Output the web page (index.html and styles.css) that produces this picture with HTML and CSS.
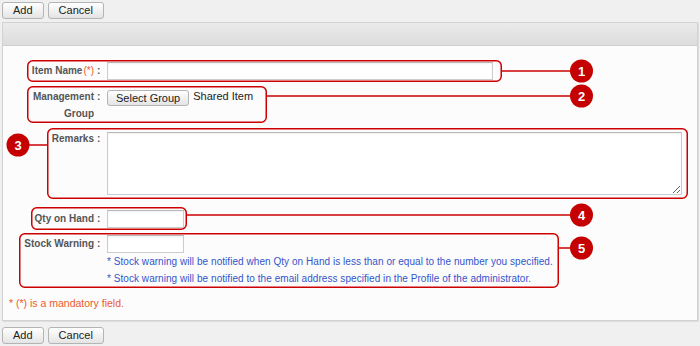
FILE: index.html
```html
<!DOCTYPE html>
<html lang="en">
<head>
  <meta charset="UTF-8" />
  <title>Add Item</title>
  <link rel="stylesheet" href="styles.css">
</head>
<body>
  <div class="toolbar">
    <button class="btn">Add</button>
    <button class="btn">Cancel</button>
  </div>

  <div class="panel">
    <div class="panel-head"></div>
    <div class="panel-body">
      <div class="field field-name">
        <label class="label">Item Name<span class="req">(*)</span></label>
        <span class="colon">:</span>
        <div class="control"><input type="text" class="text text-wide"></div>
      </div>

      <div class="field field-group">
        <label class="label label-wrap">Management Group</label>
        <span class="colon">:</span>
        <div class="control control-group">
          <button class="btn btn-select">Select Group</button>
          <span class="shared">Shared Item</span>
        </div>
      </div>

      <div class="field field-remarks">
        <label class="label">Remarks</label>
        <span class="colon">:</span>
        <div class="control"><textarea class="area"></textarea></div>
      </div>

      <div class="field field-qty">
        <label class="label">Qty on Hand</label>
        <span class="colon">:</span>
        <div class="control"><input type="text" class="text text-short"></div>
      </div>

      <div class="field field-warning">
        <label class="label">Stock Warning</label>
        <span class="colon">:</span>
        <div class="control">
          <input type="text" class="text text-short">
          <p class="note">* Stock warning will be notified when Qty on Hand is less than or equal to the number you specified.</p>
          <p class="note">* Stock warning will be notified to the email address specified in the Profile of the administrator.</p>
        </div>
      </div>

      <p class="mandatory">* (*) is a mandatory field.</p>

      <!-- help callouts drawn over the form -->
      <svg class="callouts" width="694" height="260" viewBox="0 0 694 260">
        <g class="box">
          <rect x="24.75" y="14.75" width="473.5" height="20.5" rx="5" />
          <rect x="24.75" y="40.75" width="238.5" height="35.5" rx="5" />
          <rect x="44.75" y="82.75" width="639.5" height="69.5" rx="5" />
          <rect x="28.75" y="161.75" width="154.5" height="21.5" rx="5" />
          <rect x="16.75" y="187.75" width="538.5" height="53.5" rx="5" />
        </g>
        <g class="link">
          <line x1="498" y1="25" x2="570" y2="25" />
          <line x1="263" y1="50" x2="570" y2="50" />
          <line x1="22" y1="99" x2="44" y2="99" />
          <line x1="183" y1="169" x2="570" y2="169" />
          <line x1="555" y1="202" x2="570" y2="202" />
        </g>
        <g class="dot">
          <circle cx="578.5" cy="25" r="11.5" />
          <circle cx="578.5" cy="50" r="11.5" />
          <circle cx="15" cy="99" r="11.5" />
          <circle cx="578.5" cy="169" r="11.5" />
          <circle cx="578.5" cy="202" r="11.5" />
        </g>
        <g class="num">
          <text x="578.5" y="29.5">1</text>
          <text x="578.5" y="54.5">2</text>
          <text x="15" y="103.5">3</text>
          <text x="578.5" y="173.5">4</text>
          <text x="578.5" y="206.5">5</text>
        </g>
      </svg>
    </div>
  </div>

  <div class="toolbar toolbar-bottom">
    <button class="btn">Add</button>
    <button class="btn">Cancel</button>
  </div>
</body>
</html>
```

FILE: styles.css
```css
:root {
  --page: #f0f0f0;
  --panel: #fcfcfc;
  --line: #d2d2d2;
  --label: #555555;
  --red: #cc0000;
  --blue: #3355cc;
  --orange: #ee5a2a;
}
* {
  margin: 0;
  padding: 0;
  box-sizing: border-box;
}
body {
  font-family: 'Liberation Sans', Arial, sans-serif;
  font-size: 11px;
  background: var(--page);
  color: #222;
}
.toolbar {
  display: flex;
  gap: 4px;
  padding: 2px 2px 0;
  height: 22px;
}
.toolbar-bottom {
  padding-top: 6px;
  height: auto;
}
.btn {
  font-family: inherit;
  font-size: 11px;
  color: #222;
  height: 17px;
  line-height: 15px;
  padding: 0 10px;
  min-width: 41px;
  border: 1px solid #b4b4b4;
  border-radius: 3px;
  background: linear-gradient(#ffffff, #e4e4e4);
  cursor: pointer;
}
.panel {
  margin: 0 2px;
  border: 1px solid var(--line);
  box-shadow: 1px 1px 0 #dddddd;
  background: var(--panel);
}
.panel-head {
  height: 23px;
  background: linear-gradient(#ebebeb, #dcdcdc);
  border-bottom: 1px solid #cfcfcf;
}
.panel-body {
  position: relative;
  padding: 16px 0 10px;
}
.field {
  display: grid;
  grid-template-columns: 77px 13px 1fr;
  padding-left: 14px;
  align-items: start;
}
.label {
  font-size: 10px;
  font-weight: bold;
  color: var(--label);
  text-align: right;
  line-height: 18px;
}
.label-wrap {
  line-height: 17px;
}
.req {
  color: var(--orange);
  font-weight: normal;
  margin-left: 1px;
}
.colon {
  font-size: 10px;
  font-weight: bold;
  color: var(--label);
  line-height: 18px;
  padding-left: 3px;
}
.field-group {
  margin-top: 8px;
}
.field-remarks {
  margin-top: 8px;
}
.field-qty {
  margin-top: 15px;
}
.field-warning {
  margin-top: 7px;
}
.control-group {
  display: flex;
  align-items: flex-start;
  gap: 4px;
}
.btn-select {
  margin-top: 2px;
  height: 16px;
  line-height: 14px;
  padding: 0 8px;
}
.shared {
  font-size: 11px;
  line-height: 17px;
}
.text,
.area {
  display: block;
  height: 18px;
  border: 1px solid #cccccc;
  border-top-color: #b9b9b9;
  background: #ffffff;
  box-shadow: inset 0 1px 2px rgba(0, 0, 0, 0.06);
  font-family: inherit;
  font-size: 11px;
}
.text-wide {
  width: 386px;
}
.text-short {
  width: 77px;
}
.area {
  margin-top: 2px;
  width: 575px;
  height: 63px;
  resize: both;
}
.note {
  color: var(--blue);
  font-size: 10px;
  letter-spacing: 0.05px;
  line-height: 17px;
}
.mandatory {
  margin-top: 9px;
  padding-left: 6px;
  color: var(--orange);
  font-size: 10.5px;
  line-height: 14px;
}
.callouts {
  position: absolute;
  left: 0;
  top: 0;
  pointer-events: none;
}
.callouts .box rect {
  fill: none;
  stroke: var(--red);
  stroke-width: 1.5;
}
.callouts .link line {
  stroke: var(--red);
  stroke-width: 1.5;
}
.callouts .dot circle {
  fill: #c40000;
}
.callouts .num text {
  fill: #ffffff;
  font-family: 'Liberation Sans', Arial, sans-serif;
  font-size: 13px;
  font-weight: bold;
  text-anchor: middle;
}
```
